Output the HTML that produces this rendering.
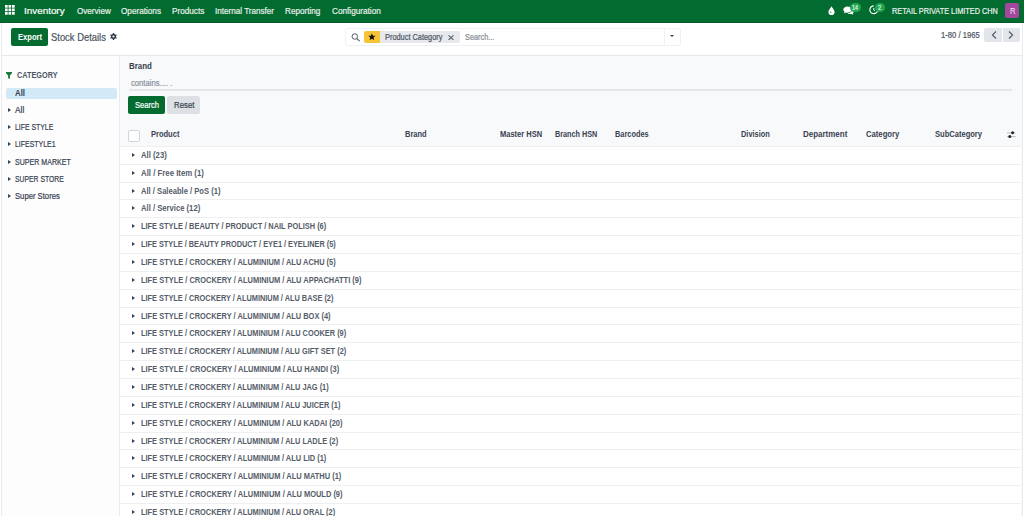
<!DOCTYPE html>
<html><head><meta charset="utf-8">
<style>
html,body{margin:0;padding:0;width:1024px;height:516px;overflow:hidden;background:#ffffff;font-family:"Liberation Sans",sans-serif;}
.t{position:absolute;white-space:pre;line-height:1.117;transform-origin:0 0;display:block;}
.r{-webkit-text-stroke:0.2px currentColor;}
.abs{position:absolute;}
#nav{position:absolute;left:0;top:0;width:1024px;height:23px;background:#026b30;}
#cp{position:absolute;left:0;top:23px;width:1024px;height:32px;background:#ffffff;}
#lborder{position:absolute;left:1px;top:23px;width:1px;height:493px;background:#e8eaed;}
#rborder{position:absolute;left:1022px;top:23px;width:1px;height:493px;background:#e8eaed;}
#cpborder{position:absolute;left:1px;top:55px;width:1022px;height:1px;background:#e6e8eb;}
#side{position:absolute;left:2px;top:56px;width:117px;height:460px;background:#fdfdfe;}
#sideb{position:absolute;left:119px;top:56px;width:1px;height:460px;background:#eaecef;}
#main{position:absolute;left:120px;top:56px;width:902px;height:460px;background:#f8f9fa;}
.rowb{position:absolute;left:120px;width:901px;height:1px;background:#edeff1;}
.rowbg{position:absolute;left:120px;width:901px;background:#ffffff;}
.caret{position:absolute;width:0;height:0;border-top:3px solid transparent;border-bottom:3px solid transparent;border-left:3px solid #374151;}
</style></head><body>
<div id="nav"></div>
<div id="cp"></div>
<div id="lborder"></div>
<div id="rborder"></div>
<div id="cpborder"></div>
<div id="side"></div>
<div id="sideb"></div>
<div id="main"></div>
<div class="rowbg" style="top:146px;height:18px"></div>
<div class="rowbg" style="top:164px;height:18px"></div>
<div class="rowbg" style="top:182px;height:17px"></div>
<div class="rowbg" style="top:199px;height:18px"></div>
<div class="rowbg" style="top:217px;height:18px"></div>
<div class="rowbg" style="top:235px;height:18px"></div>
<div class="rowbg" style="top:253px;height:18px"></div>
<div class="rowbg" style="top:271px;height:18px"></div>
<div class="rowbg" style="top:289px;height:18px"></div>
<div class="rowbg" style="top:307px;height:17px"></div>
<div class="rowbg" style="top:324px;height:18px"></div>
<div class="rowbg" style="top:342px;height:18px"></div>
<div class="rowbg" style="top:360px;height:18px"></div>
<div class="rowbg" style="top:378px;height:18px"></div>
<div class="rowbg" style="top:396px;height:18px"></div>
<div class="rowbg" style="top:414px;height:18px"></div>
<div class="rowbg" style="top:432px;height:17px"></div>
<div class="rowbg" style="top:449px;height:18px"></div>
<div class="rowbg" style="top:467px;height:18px"></div>
<div class="rowbg" style="top:485px;height:18px"></div>
<div class="rowbg" style="top:503px;height:18px"></div>
<div class="rowbg" style="top:521px;height:18px"></div>
<div class="rowb" style="top:146px"></div>
<div class="rowb" style="top:164px"></div>
<div class="rowb" style="top:182px"></div>
<div class="rowb" style="top:199px"></div>
<div class="rowb" style="top:217px"></div>
<div class="rowb" style="top:235px"></div>
<div class="rowb" style="top:253px"></div>
<div class="rowb" style="top:271px"></div>
<div class="rowb" style="top:289px"></div>
<div class="rowb" style="top:307px"></div>
<div class="rowb" style="top:324px"></div>
<div class="rowb" style="top:342px"></div>
<div class="rowb" style="top:360px"></div>
<div class="rowb" style="top:378px"></div>
<div class="rowb" style="top:396px"></div>
<div class="rowb" style="top:414px"></div>
<div class="rowb" style="top:432px"></div>
<div class="rowb" style="top:449px"></div>
<div class="rowb" style="top:467px"></div>
<div class="rowb" style="top:485px"></div>
<div class="rowb" style="top:503px"></div>
<div class="rowb" style="top:521px"></div>
<div class="caret" style="left:131.8px;top:153.00px;border-top-width:2.2px;border-bottom-width:2.2px;border-left-width:3.3px"></div>
<div class="caret" style="left:131.8px;top:171.00px;border-top-width:2.2px;border-bottom-width:2.2px;border-left-width:3.3px"></div>
<div class="caret" style="left:131.8px;top:189.00px;border-top-width:2.2px;border-bottom-width:2.2px;border-left-width:3.3px"></div>
<div class="caret" style="left:131.8px;top:206.00px;border-top-width:2.2px;border-bottom-width:2.2px;border-left-width:3.3px"></div>
<div class="caret" style="left:131.8px;top:224.00px;border-top-width:2.2px;border-bottom-width:2.2px;border-left-width:3.3px"></div>
<div class="caret" style="left:131.8px;top:242.00px;border-top-width:2.2px;border-bottom-width:2.2px;border-left-width:3.3px"></div>
<div class="caret" style="left:131.8px;top:260.00px;border-top-width:2.2px;border-bottom-width:2.2px;border-left-width:3.3px"></div>
<div class="caret" style="left:131.8px;top:278.00px;border-top-width:2.2px;border-bottom-width:2.2px;border-left-width:3.3px"></div>
<div class="caret" style="left:131.8px;top:296.00px;border-top-width:2.2px;border-bottom-width:2.2px;border-left-width:3.3px"></div>
<div class="caret" style="left:131.8px;top:314.00px;border-top-width:2.2px;border-bottom-width:2.2px;border-left-width:3.3px"></div>
<div class="caret" style="left:131.8px;top:331.00px;border-top-width:2.2px;border-bottom-width:2.2px;border-left-width:3.3px"></div>
<div class="caret" style="left:131.8px;top:349.00px;border-top-width:2.2px;border-bottom-width:2.2px;border-left-width:3.3px"></div>
<div class="caret" style="left:131.8px;top:367.00px;border-top-width:2.2px;border-bottom-width:2.2px;border-left-width:3.3px"></div>
<div class="caret" style="left:131.8px;top:385.00px;border-top-width:2.2px;border-bottom-width:2.2px;border-left-width:3.3px"></div>
<div class="caret" style="left:131.8px;top:403.00px;border-top-width:2.2px;border-bottom-width:2.2px;border-left-width:3.3px"></div>
<div class="caret" style="left:131.8px;top:421.00px;border-top-width:2.2px;border-bottom-width:2.2px;border-left-width:3.3px"></div>
<div class="caret" style="left:131.8px;top:439.00px;border-top-width:2.2px;border-bottom-width:2.2px;border-left-width:3.3px"></div>
<div class="caret" style="left:131.8px;top:456.00px;border-top-width:2.2px;border-bottom-width:2.2px;border-left-width:3.3px"></div>
<div class="caret" style="left:131.8px;top:474.00px;border-top-width:2.2px;border-bottom-width:2.2px;border-left-width:3.3px"></div>
<div class="caret" style="left:131.8px;top:492.00px;border-top-width:2.2px;border-bottom-width:2.2px;border-left-width:3.3px"></div>
<div class="caret" style="left:131.8px;top:510.00px;border-top-width:2.2px;border-bottom-width:2.2px;border-left-width:3.3px"></div>
<div class="caret" style="left:8.2px;top:107.80px;border-top-width:2.4px;border-bottom-width:2.4px;border-left-width:3px"></div>
<div class="caret" style="left:8.2px;top:125.12px;border-top-width:2.4px;border-bottom-width:2.4px;border-left-width:3px"></div>
<div class="caret" style="left:8.2px;top:142.44px;border-top-width:2.4px;border-bottom-width:2.4px;border-left-width:3px"></div>
<div class="caret" style="left:8.2px;top:159.76px;border-top-width:2.4px;border-bottom-width:2.4px;border-left-width:3px"></div>
<div class="caret" style="left:8.2px;top:177.08px;border-top-width:2.4px;border-bottom-width:2.4px;border-left-width:3px"></div>
<div class="caret" style="left:8.2px;top:194.40px;border-top-width:2.4px;border-bottom-width:2.4px;border-left-width:3px"></div>

<!-- navbar grid icon -->
<svg class="abs" style="left:4.7px;top:4.9px" width="10" height="10" viewBox="0 0 10 10">
<g fill="#ffffff">
<rect x="0" y="0" width="2.7" height="2.7"/><rect x="3.5" y="0" width="2.7" height="2.7"/><rect x="7" y="0" width="2.7" height="2.7"/>
<rect x="0" y="3.5" width="2.7" height="2.7"/><rect x="3.5" y="3.5" width="2.7" height="2.7"/><rect x="7" y="3.5" width="2.7" height="2.7"/>
<rect x="0" y="7" width="2.7" height="2.7"/><rect x="3.5" y="7" width="2.7" height="2.7"/><rect x="7" y="7" width="2.7" height="2.7"/>
</g></svg>
<div class="abs" style="left:0;top:22px;width:1024px;height:1px;background:#015a27;"></div>
<!-- drop icon -->
<svg class="abs" style="left:827.5px;top:5.5px" width="7" height="9" viewBox="0 0 7 9">
<path d="M3.5 0.2 C4.2 1.9 6.6 4.1 6.6 5.9 A3.1 3.1 0 0 1 0.4 5.9 C0.4 4.1 2.8 1.9 3.5 0.2 Z" fill="#ffffff"/>
<circle cx="2.7" cy="6.2" r="0.7" fill="#3f8a5a"/>
</svg>
<!-- chat icon -->
<svg class="abs" style="left:843px;top:5.8px" width="11" height="9" viewBox="0 0 11 9">
<path d="M4.5 0.5 C7 0.5 8.8 1.9 8.8 3.6 C8.8 5.3 7 6.7 4.5 6.7 C4 6.7 3.5 6.6 3 6.5 L0.8 7.6 L1.6 5.8 C0.8 5.2 0.3 4.4 0.3 3.6 C0.3 1.9 2.1 0.5 4.5 0.5 Z" fill="#ffffff"/>
<path d="M9.3 3.2 C10.3 3.8 10.8 4.6 10.8 5.5 C10.8 6.2 10.4 6.9 9.8 7.4 L10.4 8.8 L8.6 8.0 C8.2 8.1 7.8 8.1 7.4 8.1 C6.2 8.1 5.2 7.8 4.5 7.2 C7.3 7.1 9.4 5.5 9.3 3.2 Z" fill="#ffffff"/>
</svg>
<div class="abs" style="left:849.8px;top:3px;width:11px;height:9px;border-radius:4.5px;background:#21a550;"></div>
<!-- activity icon -->
<svg class="abs" style="left:868.8px;top:5px" width="9.5" height="9.5" viewBox="0 0 10 10">
<path d="M5 0.9 A4.1 4.1 0 1 0 9.1 5" fill="none" stroke="#ffffff" stroke-width="1.2"/>
<path d="M5 3 L5 5.3 L6.4 6.2" fill="none" stroke="#ffffff" stroke-width="1"/>
</svg>
<div class="abs" style="left:875px;top:3px;width:9.5px;height:9px;border-radius:4.5px;background:#21a550;"></div>
<!-- avatar -->
<div class="abs" style="left:1005px;top:3px;width:14.4px;height:14.6px;border-radius:2px;background:#a5479f;"></div>

<!-- export button -->
<div class="abs" style="left:11px;top:28px;width:37px;height:18.3px;border-radius:2px;background:#036b30;"></div>
<!-- gear -->
<svg class="abs" style="left:110px;top:33.1px" width="7" height="7" viewBox="0 0 7 7">
<g fill="#2f3a48">
<path d="M3.5 0.9 A2.6 2.6 0 1 1 3.49 0.9 Z M3.5 2.4 A1.1 1.1 0 1 0 3.51 2.4 Z" fill-rule="evenodd"/>
<rect x="2.8" y="0" width="1.4" height="7"/>
<rect x="2.8" y="0" width="1.4" height="7" transform="rotate(60 3.5 3.5)"/>
<rect x="2.8" y="0" width="1.4" height="7" transform="rotate(-60 3.5 3.5)"/>
</g>
<circle cx="3.5" cy="3.5" r="1.05" fill="#ffffff"/>
</svg>
<!-- search box -->
<div class="abs" style="left:345.2px;top:28.2px;width:333.6px;height:15.8px;border:1px solid #eef0f2;border-radius:3px;background:#ffffff;"></div>
<div class="abs" style="left:664px;top:29px;width:1px;height:16px;background:#eef0f2;"></div>
<svg class="abs" style="left:351px;top:33px" width="10" height="9" viewBox="0 0 10 9">
<circle cx="3.8" cy="3.5" r="2.75" fill="none" stroke="#4b5563" stroke-width="0.95"/>
<path d="M5.8 5.6 L8.6 8.2" stroke="#4b5563" stroke-width="1.1"/>
</svg>
<div class="abs" style="left:364.3px;top:30.9px;width:15.7px;height:12.6px;border-radius:2px 0 0 2px;background:#f8c437;"></div>
<div class="abs" style="left:380px;top:30.9px;width:80px;height:12.6px;border-radius:0 2px 2px 0;background:#e7e9ed;"></div>
<svg class="abs" style="left:367.9px;top:32.6px" width="7.8" height="7.8" viewBox="0 0 10 10">
<path d="M5 0.3 L6.3 3.4 L9.6 3.6 L7.1 5.8 L7.9 9.1 L5 7.3 L2.1 9.1 L2.9 5.8 L0.4 3.6 L3.7 3.4 Z" fill="#111111"/>
</svg>
<svg class="abs" style="left:447.7px;top:34.6px" width="6" height="5.4" viewBox="0 0 6 5.4">
<path d="M0.5 0.4 L5.5 5 M5.5 0.4 L0.5 5" stroke="#5b6470" stroke-width="1.1"/>
</svg>
<div class="abs" style="left:669.9px;top:35.3px;width:0;height:0;border-left:2.5px solid transparent;border-right:2.5px solid transparent;border-top:2.9px solid #374151;"></div>

<!-- pager -->
<div class="abs" style="left:984.3px;top:28px;width:17.8px;height:14px;border-radius:2px 0 0 2px;background:#e2e5e9;"></div>
<div class="abs" style="left:1002.8px;top:28px;width:17.7px;height:14px;border-radius:0 2px 2px 0;background:#e2e5e9;"></div>
<svg class="abs" style="left:990.5px;top:31.2px" width="6" height="8" viewBox="0 0 6 8">
<path d="M5 0.5 L1.4 4 L5 7.5" fill="none" stroke="#4b5563" stroke-width="1.05"/>
</svg>
<svg class="abs" style="left:1008.3px;top:31.2px" width="6" height="8" viewBox="0 0 6 8">
<path d="M1 0.5 L4.6 4 L1 7.5" fill="none" stroke="#4b5563" stroke-width="1.05"/>
</svg>

<!-- sidebar -->
<svg class="abs" style="left:5.8px;top:71.5px" width="6" height="7" viewBox="0 0 6 7">
<path d="M0 0 L6 0 L6 1.2 L3.9 3.4 L3.9 7 L2.1 6.2 L2.1 3.4 L0 1.2 Z" fill="#1a7a3e"/>
</svg>
<div class="abs" style="left:5.6px;top:87.5px;width:111.4px;height:11.4px;border-radius:2px;background:#d2eaf7;"></div>

<!-- brand filter -->
<div class="abs" style="left:128.9px;top:89px;width:883px;height:2px;background:#e4e7ea;"></div>
<div class="abs" style="left:128.2px;top:96px;width:36.5px;height:18px;border-radius:2px;background:#036b30;"></div>
<div class="abs" style="left:167px;top:96px;width:33.3px;height:18px;border-radius:2px;background:#dde1e5;"></div>

<!-- header checkbox -->
<div class="abs" style="left:128.2px;top:130.1px;width:10px;height:10px;border:1px solid #d1d5db;border-radius:2px;background:#ffffff;"></div>
<!-- settings icon -->
<svg class="abs" style="left:1007px;top:131px" width="9" height="8" viewBox="0 0 9 8">
<path d="M0 1.8 L8.5 1.8 M0 5.6 L8.5 5.6" stroke="#b8bdc4" stroke-width="1"/>
<circle cx="5.6" cy="1.8" r="1.5" fill="#1f2937"/><circle cx="2.8" cy="5.6" r="1.5" fill="#1f2937"/>
</svg>

<span class="t r" style="left:24.40px;top:5.00px;font-size:9.9px;font-weight:400;color:#ffffff;transform:scaleX(0.9994);">Inventory</span>
<span class="t r" style="left:76.50px;top:7.00px;font-size:8.6px;font-weight:400;color:#e8f0ea;transform:scaleX(0.9434);">Overview</span>
<span class="t r" style="left:121.20px;top:7.00px;font-size:8.6px;font-weight:400;color:#e8f0ea;transform:scaleX(0.9513);">Operations</span>
<span class="t r" style="left:172.00px;top:7.00px;font-size:8.6px;font-weight:400;color:#e8f0ea;transform:scaleX(0.9522);">Products</span>
<span class="t r" style="left:215.00px;top:7.00px;font-size:8.6px;font-weight:400;color:#e8f0ea;transform:scaleX(0.9428);">Internal Transfer</span>
<span class="t r" style="left:285.00px;top:7.00px;font-size:8.6px;font-weight:400;color:#e8f0ea;transform:scaleX(0.9473);">Reporting</span>
<span class="t r" style="left:331.60px;top:7.00px;font-size:8.6px;font-weight:400;color:#e8f0ea;transform:scaleX(0.9545);">Configuration</span>
<span class="t r" style="left:892.20px;top:7.00px;font-size:8.4px;font-weight:400;color:#e8f0ea;transform:scaleX(0.8734);">RETAIL PRIVATE LIMITED CHN</span>
<span class="t r" style="left:852.40px;top:4.00px;font-size:6.4px;font-weight:400;color:#e8f5ec;transform:scaleX(0.8440);">14</span>
<span class="t r" style="left:878.00px;top:4.00px;font-size:6.4px;font-weight:400;color:#e8f5ec;transform:scaleX(0.8982);">2</span>
<span class="t r" style="left:1009.70px;top:7.00px;font-size:8.8px;font-weight:400;color:#f4e9f4;transform:scaleX(0.8649);-webkit-text-stroke:0;">R</span>
<span class="t" style="left:17.50px;top:33.00px;font-size:8.6px;font-weight:700;color:#ffffff;transform:scaleX(0.8854);">Export</span>
<span class="t r" style="left:50.50px;top:32.00px;font-size:10.2px;font-weight:400;color:#4b5563;transform:scaleX(0.9234);">Stock Details</span>
<span class="t r" style="left:384.50px;top:33.00px;font-size:8.2px;font-weight:400;color:#4b5563;transform:scaleX(0.9024);">Product Category</span>
<span class="t r" style="left:464.60px;top:33.00px;font-size:8.2px;font-weight:400;color:#858b94;transform:scaleX(0.8969);">Search...</span>
<span class="t r" style="left:940.60px;top:31.00px;font-size:8.3px;font-weight:400;color:#4b5563;transform:scaleX(0.9218);">1-80 / 1965</span>
<span class="t" style="left:16.80px;top:71.00px;font-size:8.4px;font-weight:700;color:#4b5563;transform:scaleX(0.8725);">CATEGORY</span>
<span class="t" style="left:14.60px;top:89.00px;font-size:8.4px;font-weight:700;color:#374151;transform:scaleX(0.9343);">All</span>
<span class="t r" style="left:14.70px;top:106.00px;font-size:8.4px;font-weight:400;color:#374151;transform:scaleX(0.9987);">All</span>
<span class="t r" style="left:14.70px;top:123.00px;font-size:8.4px;font-weight:400;color:#374151;transform:scaleX(0.8228);">LIFE STYLE</span>
<span class="t r" style="left:14.70px;top:140.00px;font-size:8.4px;font-weight:400;color:#374151;transform:scaleX(0.8284);">LIFESTYLE1</span>
<span class="t r" style="left:14.70px;top:158.00px;font-size:8.4px;font-weight:400;color:#374151;transform:scaleX(0.8443);">SUPER MARKET</span>
<span class="t r" style="left:14.70px;top:175.00px;font-size:8.4px;font-weight:400;color:#374151;transform:scaleX(0.8148);">SUPER STORE</span>
<span class="t r" style="left:14.70px;top:192.00px;font-size:8.4px;font-weight:400;color:#374151;transform:scaleX(0.9163);">Super Stores</span>
<span class="t" style="left:128.90px;top:62.00px;font-size:8.4px;font-weight:700;color:#374151;transform:scaleX(0.9462);">Brand</span>
<span class="t r" style="left:130.70px;top:79.00px;font-size:8.4px;font-weight:400;color:#8a9099;transform:scaleX(0.9146);">contains.... .</span>
<span class="t r" style="left:134.50px;top:101.00px;font-size:8.4px;font-weight:400;color:#ffffff;transform:scaleX(0.9041);">Search</span>
<span class="t r" style="left:173.60px;top:101.00px;font-size:8.4px;font-weight:400;color:#374151;transform:scaleX(0.9319);">Reset</span>
<span class="t" style="left:150.90px;top:130.00px;font-size:8.2px;font-weight:700;color:#374151;transform:scaleX(0.9180);">Product</span>
<span class="t" style="left:405.30px;top:130.00px;font-size:8.2px;font-weight:700;color:#374151;transform:scaleX(0.9131);">Brand</span>
<span class="t" style="left:500.20px;top:130.00px;font-size:8.2px;font-weight:700;color:#374151;transform:scaleX(0.9180);">Master HSN</span>
<span class="t" style="left:554.80px;top:130.00px;font-size:8.2px;font-weight:700;color:#374151;transform:scaleX(0.8832);">Branch HSN</span>
<span class="t" style="left:615.40px;top:130.00px;font-size:8.2px;font-weight:700;color:#374151;transform:scaleX(0.9001);">Barcodes</span>
<span class="t" style="left:740.60px;top:130.00px;font-size:8.2px;font-weight:700;color:#374151;transform:scaleX(0.9040);">Division</span>
<span class="t" style="left:802.60px;top:130.00px;font-size:8.2px;font-weight:700;color:#374151;transform:scaleX(0.9736);">Department</span>
<span class="t" style="left:865.50px;top:130.00px;font-size:8.2px;font-weight:700;color:#374151;transform:scaleX(0.9380);">Category</span>
<span class="t" style="left:935.30px;top:130.00px;font-size:8.2px;font-weight:700;color:#374151;transform:scaleX(0.9224);">SubCategory</span>
<span class="t" style="left:140.80px;top:151.00px;font-size:8.2px;font-weight:700;color:#555d69;transform:scaleX(0.9446);">All (23)</span>
<span class="t" style="left:140.80px;top:169.00px;font-size:8.2px;font-weight:700;color:#555d69;transform:scaleX(0.9533);">All / Free Item (1)</span>
<span class="t" style="left:140.80px;top:187.00px;font-size:8.2px;font-weight:700;color:#555d69;transform:scaleX(0.9293);">All / Saleable / PoS (1)</span>
<span class="t" style="left:140.80px;top:204.00px;font-size:8.2px;font-weight:700;color:#555d69;transform:scaleX(0.9357);">All / Service (12)</span>
<span class="t" style="left:140.80px;top:222.00px;font-size:8.2px;font-weight:700;color:#555d69;transform:scaleX(0.9040);">LIFE STYLE / BEAUTY / PRODUCT / NAIL POLISH (6)</span>
<span class="t" style="left:140.80px;top:240.00px;font-size:8.2px;font-weight:700;color:#555d69;transform:scaleX(0.8964);">LIFE STYLE / BEAUTY PRODUCT / EYE1 / EYELINER (5)</span>
<span class="t" style="left:140.80px;top:258.00px;font-size:8.2px;font-weight:700;color:#555d69;transform:scaleX(0.9088);">LIFE STYLE / CROCKERY / ALUMINIUM / ALU ACHU (5)</span>
<span class="t" style="left:140.80px;top:276.00px;font-size:8.2px;font-weight:700;color:#555d69;transform:scaleX(0.9102);">LIFE STYLE / CROCKERY / ALUMINIUM / ALU APPACHATTI (9)</span>
<span class="t" style="left:140.80px;top:294.00px;font-size:8.2px;font-weight:700;color:#555d69;transform:scaleX(0.9006);">LIFE STYLE / CROCKERY / ALUMINIUM / ALU BASE (2)</span>
<span class="t" style="left:140.80px;top:312.00px;font-size:8.2px;font-weight:700;color:#555d69;transform:scaleX(0.9083);">LIFE STYLE / CROCKERY / ALUMINIUM / ALU BOX (4)</span>
<span class="t" style="left:140.80px;top:329.00px;font-size:8.2px;font-weight:700;color:#555d69;transform:scaleX(0.9046);">LIFE STYLE / CROCKERY / ALUMINIUM / ALU COOKER (9)</span>
<span class="t" style="left:140.80px;top:347.00px;font-size:8.2px;font-weight:700;color:#555d69;transform:scaleX(0.9010);">LIFE STYLE / CROCKERY / ALUMINIUM / ALU GIFT SET (2)</span>
<span class="t" style="left:140.80px;top:365.00px;font-size:8.2px;font-weight:700;color:#555d69;transform:scaleX(0.9141);">LIFE STYLE / CROCKERY / ALUMINIUM / ALU HANDI (3)</span>
<span class="t" style="left:140.80px;top:383.00px;font-size:8.2px;font-weight:700;color:#555d69;transform:scaleX(0.9036);">LIFE STYLE / CROCKERY / ALUMINIUM / ALU JAG (1)</span>
<span class="t" style="left:140.80px;top:401.00px;font-size:8.2px;font-weight:700;color:#555d69;transform:scaleX(0.9026);">LIFE STYLE / CROCKERY / ALUMINIUM / ALU JUICER (1)</span>
<span class="t" style="left:140.80px;top:419.00px;font-size:8.2px;font-weight:700;color:#555d69;transform:scaleX(0.9102);">LIFE STYLE / CROCKERY / ALUMINIUM / ALU KADAI (20)</span>
<span class="t" style="left:140.80px;top:437.00px;font-size:8.2px;font-weight:700;color:#555d69;transform:scaleX(0.9038);">LIFE STYLE / CROCKERY / ALUMINIUM / ALU LADLE (2)</span>
<span class="t" style="left:140.80px;top:454.00px;font-size:8.2px;font-weight:700;color:#555d69;transform:scaleX(0.9079);">LIFE STYLE / CROCKERY / ALUMINIUM / ALU LID (1)</span>
<span class="t" style="left:140.80px;top:472.00px;font-size:8.2px;font-weight:700;color:#555d69;transform:scaleX(0.9111);">LIFE STYLE / CROCKERY / ALUMINIUM / ALU MATHU (1)</span>
<span class="t" style="left:140.80px;top:490.00px;font-size:8.2px;font-weight:700;color:#555d69;transform:scaleX(0.9122);">LIFE STYLE / CROCKERY / ALUMINIUM / ALU MOULD (9)</span>
<span class="t" style="left:140.80px;top:508.00px;font-size:8.2px;font-weight:700;color:#555d69;transform:scaleX(0.9077);">LIFE STYLE / CROCKERY / ALUMINIUM / ALU ORAL (2)</span>
</body></html>
